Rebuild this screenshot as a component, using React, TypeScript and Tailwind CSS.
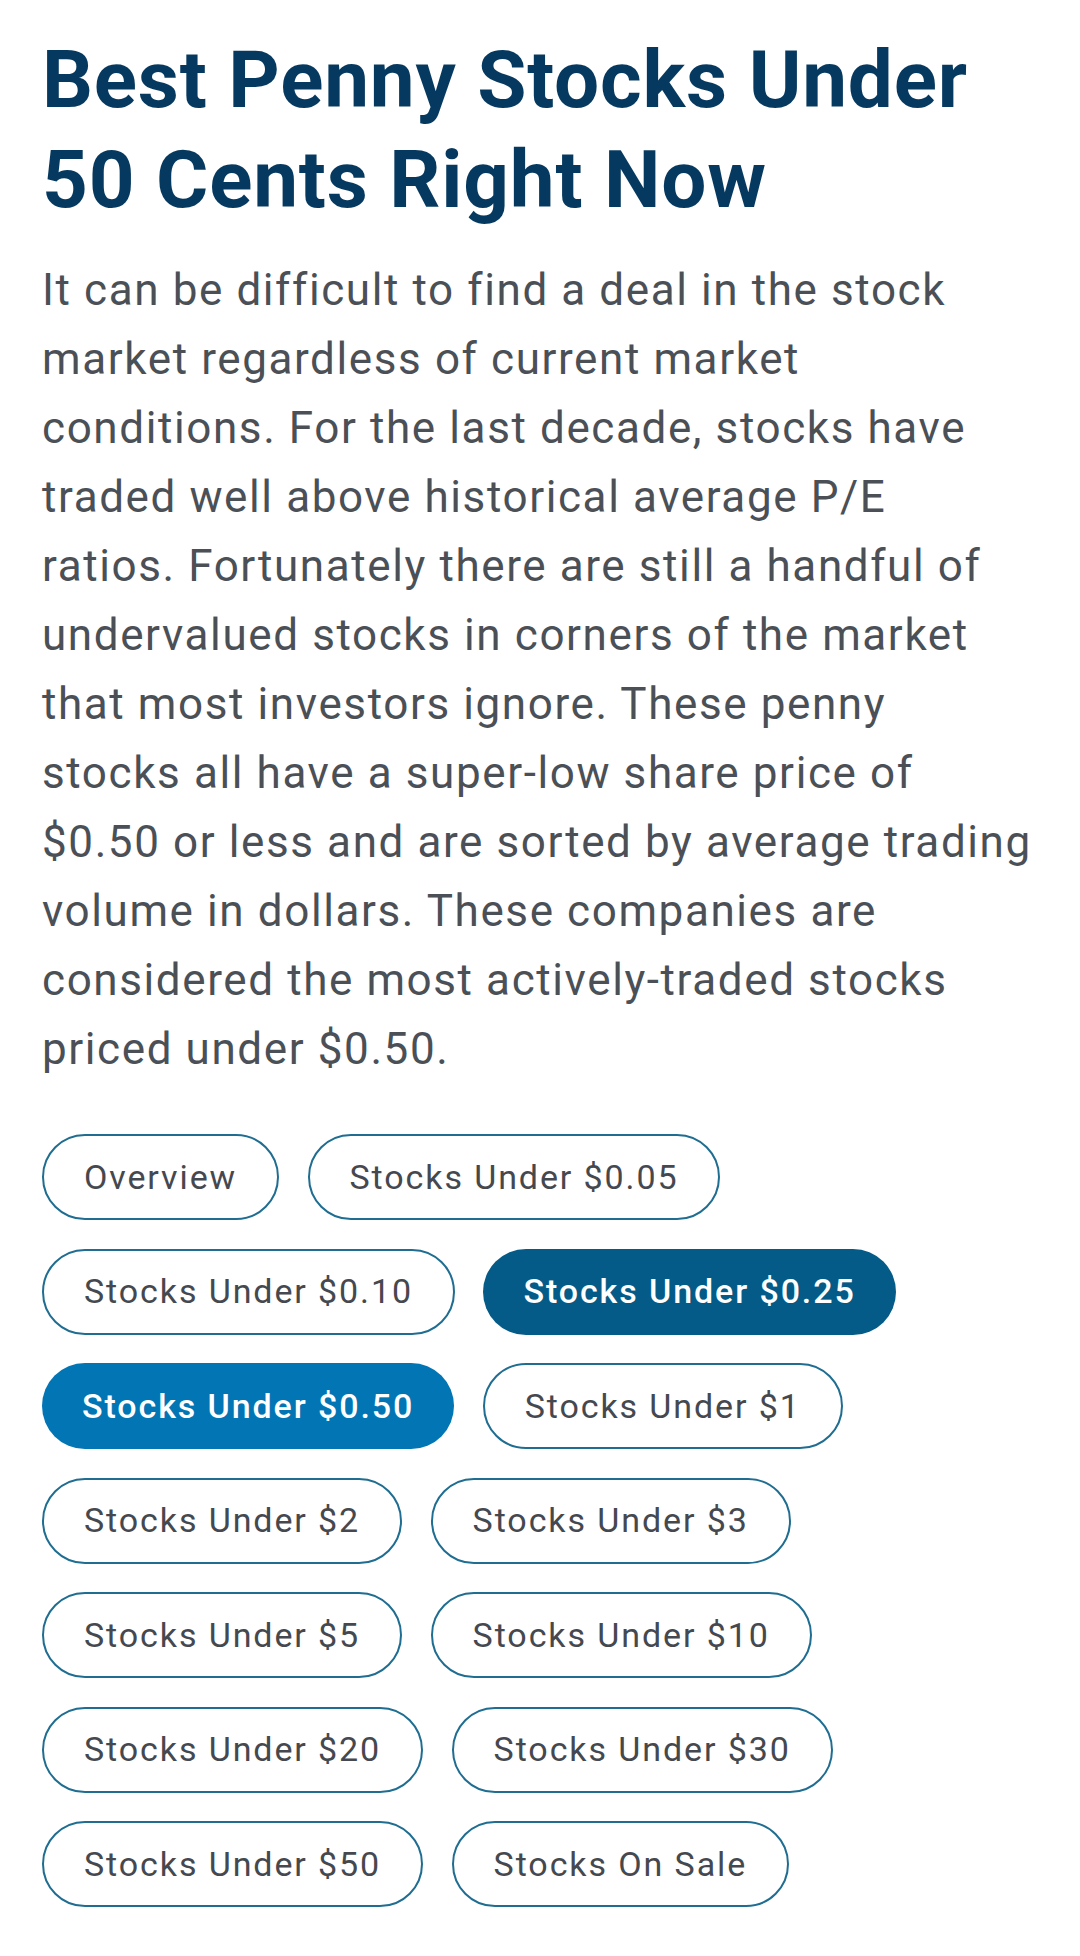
const lines = [
  "It can be difficult to find a deal in the stock",
  "market regardless of current market",
  "conditions. For the last decade, stocks have",
  "traded well above historical average P/E",
  "ratios. Fortunately there are still a handful of",
  "undervalued stocks in corners of the market",
  "that most investors ignore. These penny",
  "stocks all have a super-low share price of",
  "$0.50 or less and are sorted by average trading",
  "volume in dollars. These companies are",
  "considered the most actively-traded stocks",
  "priced under $0.50.",
];

type Link = { label: string; tone?: "dark" | "bright" };

const links: Link[] = [
  { label: "Overview" },
  { label: "Stocks Under $0.05" },
  { label: "Stocks Under $0.10" },
  { label: "Stocks Under $0.25", tone: "dark" },
  { label: "Stocks Under $0.50", tone: "bright" },
  { label: "Stocks Under $1" },
  { label: "Stocks Under $2" },
  { label: "Stocks Under $3" },
  { label: "Stocks Under $5" },
  { label: "Stocks Under $10" },
  { label: "Stocks Under $20" },
  { label: "Stocks Under $30" },
  { label: "Stocks Under $50" },
  { label: "Stocks On Sale" },
];

function Pill({ label, tone }: Link) {
  const base =
    "flex h-[86px] items-center rounded-full px-[40px] text-[34px] tracking-[1.9px] whitespace-nowrap";
  if (tone === "dark")
    return <a className={`${base} bg-[#045b87] font-medium text-white`}>{label}</a>;
  if (tone === "bright")
    return <a className={`${base} bg-[#0275b5] font-medium text-white`}>{label}</a>;
  return (
    <a className={`${base} border-2 border-[#1f6d91] bg-white text-[#45494f]`}>
      {label}
    </a>
  );
}

export default function App() {
  return (
    <div className="min-h-[1956px] bg-white px-[42px] pt-[30px] font-[Roboto,sans-serif]">
      <h1 className="text-[80px] leading-[100px] font-bold tracking-[0.8px] text-[#06395f]">
        Best Penny Stocks Under
        <br />
        50 Cents Right Now
      </h1>
      <p className="mt-[26px] text-[44px] leading-[69px] tracking-[1.6px] text-[#4b5057]">
        {lines.map((l, i) => (
          <span key={i} className="block whitespace-nowrap">
            {l}
          </span>
        ))}
      </p>
      <div className="mt-[50px] flex flex-wrap gap-[28.5px]">
        {links.map((l) => (
          <Pill key={l.label} {...l} />
        ))}
      </div>
    </div>
  );
}
